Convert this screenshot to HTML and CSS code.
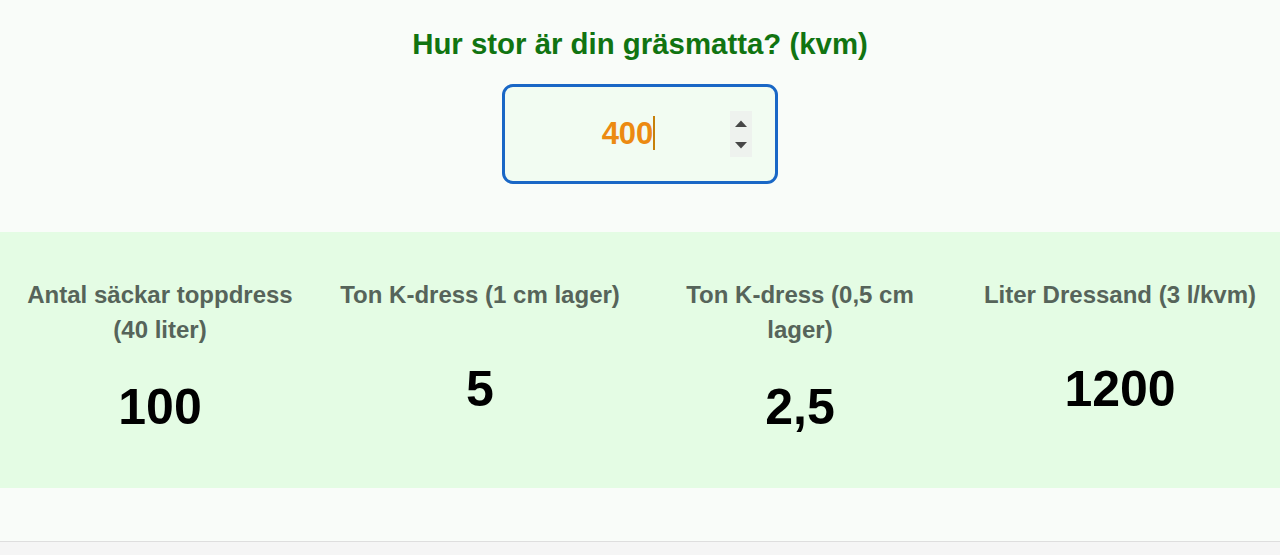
FILE: index.html
```html
<!DOCTYPE html>
<html lang="sv">
<head>
<meta charset="utf-8">
<title>Gräsmattekalkylator</title>
<link rel="stylesheet" href="styles.css">
</head>
<body>
<main class="calc">
  <section class="ask">
    <h1 class="ask-title">Hur stor är din gräsmatta? (kvm)</h1>
    <div class="field">
      <span class="field-value">400<span class="caret"></span></span>
      <span class="spin">
        <svg width="16" height="40" viewBox="0 0 16 40" aria-hidden="true">
          <path d="M2 13 L8 6.5 L14 13 Z" fill="#474747"/>
          <path d="M2 28 L14 28 L8 34.5 Z" fill="#474747"/>
        </svg>
      </span>
    </div>
  </section>

  <section class="results">
    <div class="result">
      <p class="result-label">Antal säckar toppdress (40 liter)</p>
      <div class="result-value">100</div>
    </div>
    <div class="result">
      <p class="result-label">Ton K-dress (1 cm lager)</p>
      <div class="result-value">5</div>
    </div>
    <div class="result">
      <p class="result-label">Ton K-dress (0,5 cm lager)</p>
      <div class="result-value">2,5</div>
    </div>
    <div class="result">
      <p class="result-label">Liter Dressand (3 l/kvm)</p>
      <div class="result-value">1200</div>
    </div>
  </section>
</main>
<footer class="foot"></footer>
</body>
</html>
```

FILE: styles.css
```css
* {
  box-sizing: border-box;
}

html, body {
  margin: 0;
  padding: 0;
}

body {
  font-family: "Liberation Sans", Arial, Helvetica, sans-serif;
  background: #f5f5f5;
}

.calc {
  height: 542px;
  background: #f9fcf9;
  border-bottom: 1px solid #dedede;
  display: flex;
  flex-direction: column;
}

/* question + number field */
.ask {
  padding-top: 27px;
  display: flex;
  flex-direction: column;
  align-items: center;
}

.ask-title {
  margin: 0;
  font-size: 29.4px;
  line-height: 34px;
  font-weight: bold;
  color: #117411;
}

.field {
  margin-top: 23px;
  width: 276px;
  height: 100px;
  border: 3px solid #1a67c6;
  border-radius: 11px;
  background: #f2fcf2;
  display: flex;
  align-items: center;
  padding: 0 23px 0 22px;
}

.field-value {
  flex: 1;
  text-align: center;
  font-size: 31px;
  font-weight: bold;
  color: #ec8a12;
}

.caret {
  display: inline-block;
  width: 2px;
  height: 34px;
  background: #c7800a;
  vertical-align: -6px;
}

.spin {
  width: 22px;
  height: 46px;
  background: #eef2ee;
  display: flex;
  align-items: center;
  justify-content: center;
}

/* result band */
.results {
  margin-top: 48px;
  height: 256px;
  background: #e4fce4;
  display: grid;
  grid-template-columns: repeat(4, 1fr);
  padding: 45px 0 22px;
}

.result {
  display: flex;
  flex-direction: column;
  align-items: center;
  padding: 0 14px;
  text-align: center;
}

.result-label {
  margin: 0;
  font-size: 24px;
  line-height: 35px;
  font-weight: bold;
  color: #56645a;
}

.result-value {
  flex: 1;
  display: flex;
  align-items: center;
  font-size: 50px;
  font-weight: bold;
  color: #000;
}

.foot {
  height: 12px;
  background: #f5f5f5;
}
```
